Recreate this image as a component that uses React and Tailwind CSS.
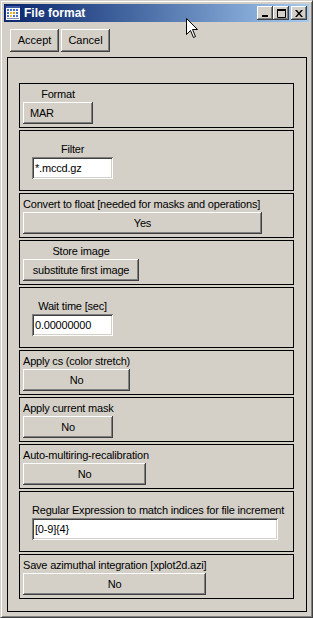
import React from 'react';

const FONT = { fontFamily: '"Liberation Sans", Arial, sans-serif' };

const raised =
  'bg-[#d4d0c8] shadow-[inset_-1px_-1px_0_#404040,inset_1px_1px_0_#ffffff,inset_-2px_-2px_0_#808080]';
const sunken =
  'bg-white shadow-[inset_1px_1px_0_#808080,inset_-1px_-1px_0_#ffffff,inset_2px_2px_0_#404040,inset_-2px_-2px_0_#d4d0c8]';

function TitleIcon() {
  return (
    <svg width="16" height="16" viewBox="0 0 16 16" className="shrink-0">
      <rect x="1" y="1" width="14" height="14" fill="#ffffff" />
      <rect x="1" y="1" width="14" height="2" fill="#3a5aa8" />
      {[4, 7, 10].map((y) =>
        [2, 5, 8, 11].map((x) => (
          <rect key={`${x}-${y}`} x={x} y={y} width="2" height="2" fill="#4a6ed0" />
        ))
      )}
      <rect x="5" y="7" width="2" height="2" fill="#f0c020" />
      <rect x="8" y="7" width="2" height="2" fill="#f0a000" />
      <rect x="5" y="10" width="2" height="2" fill="#f0c020" />
      <rect x="2" y="13" width="12" height="1" fill="#8090c0" />
      <rect x="0" y="0" width="1" height="16" fill="#20307a" />
    </svg>
  );
}

function CapButton({ children }) {
  return (
    <div className={`w-[16px] h-[14px] flex items-center justify-center ${raised}`}>
      {children}
    </div>
  );
}

function TitleBar() {
  return (
    <div className="h-[18px] flex items-center bg-linear-to-r from-[#0a246a] to-[#a6caf0] pl-[1px] pr-[2px]">
      <TitleIcon />
      <span className="ml-[3px] text-white font-bold text-[12px] leading-none" style={FONT}>
        File format
      </span>
      <div className="ml-auto flex items-center">
        <CapButton>
          <svg width="8" height="7" viewBox="0 0 8 7">
            <rect x="1" y="5" width="6" height="2" fill="#000" />
          </svg>
        </CapButton>
        <CapButton>
          <svg width="9" height="9" viewBox="0 0 9 9">
            <path d="M0.5 0.5h8v8h-8z" fill="none" stroke="#000" />
            <rect x="0" y="0" width="9" height="2" fill="#000" />
          </svg>
        </CapButton>
        <div className="w-[2px]" />
        <CapButton>
          <svg width="8" height="7" viewBox="0 0 8 7">
            <path d="M0 0h2l2 2.5L6 0h2L5 3.5 8 7H6L4 4.5 2 7H0l3-3.5z" fill="#000" />
          </svg>
        </CapButton>
      </div>
    </div>
  );
}

function Btn({ children, w, left }) {
  return (
    <div
      className={`h-[22px] flex items-center ${left ? 'justify-start pl-[7px]' : 'justify-center'} text-[11px] tracking-[-0.2px] text-black ${raised}`}
      style={{ width: w }}
    >
      {children}
    </div>
  );
}

function Label({ children }) {
  return (
    <div className="h-[15px] leading-[15px] text-[11px] tracking-[-0.2px] text-black whitespace-nowrap">
      {children}
    </div>
  );
}

function ButtonPanel({ label, value, w, center, left }) {
  return (
    <div className="border border-black h-[45px] p-[3px] flex">
      <div className={`flex flex-col ${center ? 'items-center' : 'items-start'}`}>
        <Label>{label}</Label>
        <Btn w={w} left={left}>{value}</Btn>
      </div>
    </div>
  );
}

function InputPanel({ label, value, w, center = true }) {
  return (
    <div className="border border-black h-[61px] pt-[11px] pl-[12px] flex">
      <div className={`flex flex-col ${center ? 'items-center' : 'items-start'}`}>
        <Label>{label}</Label>
        <div
          className={`h-[22px] flex items-center pl-[3px] text-[11px] tracking-[-0.2px] text-black ${sunken}`}
          style={{ width: w }}
        >
          {value}
        </div>
      </div>
    </div>
  );
}

function Cursor() {
  return (
    <svg className="absolute left-[185px] top-[17px]" width="13" height="21" viewBox="0 0 13 21">
      <path
        d="M0.5 0.5 L0.5 16.5 L4.5 12.5 L7.5 19.5 L9.5 18.5 L6.5 11.5 L11.5 11.5 Z"
        fill="#ffffff"
        stroke="#000000"
        strokeWidth="1"
        strokeLinejoin="miter"
      />
    </svg>
  );
}

export default function App() {
  return (
    <div
      className="relative w-[313px] h-[618px] bg-[#d4d0c8] border border-t-[#d4d0c8] border-l-[#d4d0c8] border-r-[#404040] border-b-[#404040] shadow-[inset_1px_1px_0_#ffffff,inset_-1px_-1px_0_#808080] p-[3px] overflow-hidden"
      style={FONT}
    >
      <TitleBar />

      <div className="flex gap-[2px] mt-[7px] ml-[6px]">
        <div className={`w-[49px] h-[23px] flex items-center justify-center text-[11px] ${raised}`}>Accept</div>
        <div className={`w-[49px] h-[23px] flex items-center justify-center text-[11px] ${raised}`}>Cancel</div>
      </div>

      <div className="mt-[5px] ml-[3px] w-[300px] h-[555px] border border-black pt-[25px] pl-[11px]">
        <div className="w-[275px] flex flex-col gap-[2px]">
          <ButtonPanel label="Format" value="MAR" w={70} center left />
          <InputPanel label="Filter" value="*.mccd.gz" w={81} />
          <ButtonPanel label="Convert to float [needed for masks and operations]" value="Yes" w={239} />
          <ButtonPanel label="Store image" value="substitute first image" w={116} center />
          <InputPanel label="Wait time [sec]" value="0.00000000" w={81} />
          <ButtonPanel label="Apply cs (color stretch)" value="No" w={107} />
          <ButtonPanel label="Apply current mask" value="No" w={90} />
          <ButtonPanel label="Auto-multiring-recalibration" value="No" w={123} />
          <InputPanel
            label="Regular Expression to match indices for file increment"
            value="[0-9]{4}"
            w={246}
            center={false}
          />
          <ButtonPanel label="Save azimuthal integration [xplot2d.azi]" value="No" w={183} />
        </div>
      </div>

      <Cursor />
    </div>
  );
}
